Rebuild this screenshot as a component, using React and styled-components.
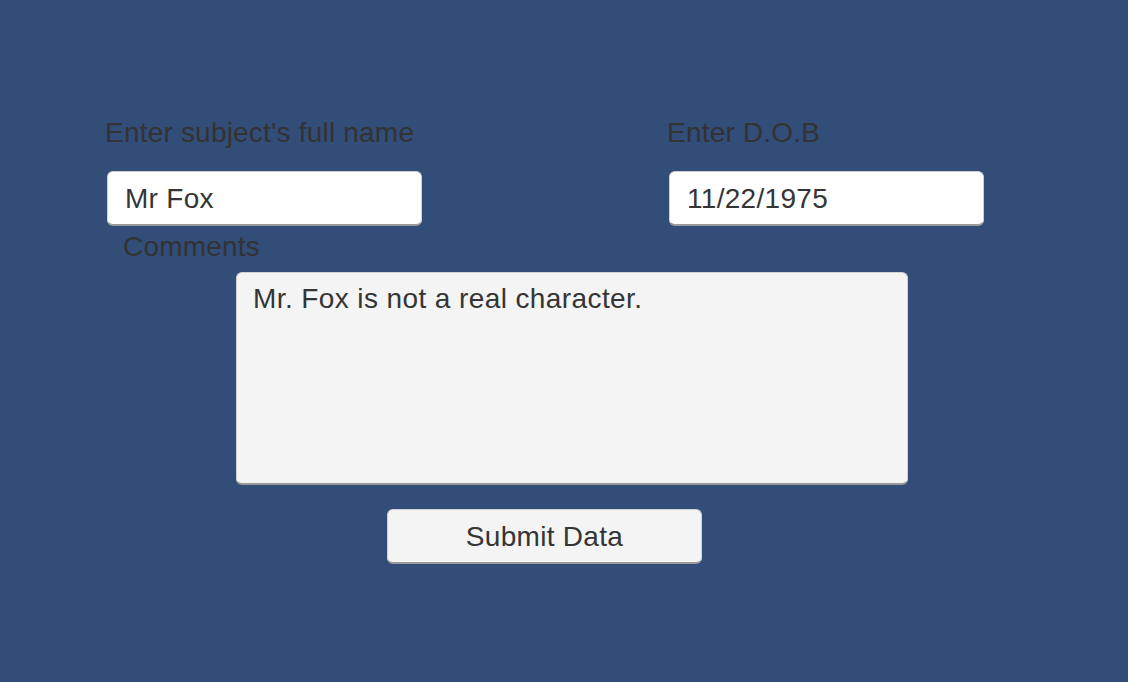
import React from "react";
import styled, { createGlobalStyle } from "styled-components";

const Global = createGlobalStyle`
  html, body { margin: 0; padding: 0; background: #314d78; }
  body { font-family: "Liberation Sans", Arial, sans-serif; }
`;

const Page = styled.div`
  width: 1128px;
  height: 682px;
  background: #314d78;
  box-sizing: border-box;
  padding-top: 117px;
  display: flex;
  flex-direction: column;
`;

const TopRow = styled.div`
  display: flex;
  padding-left: 105px;
  gap: 246px;
`;

const Field = styled.div`
  display: flex;
  flex-direction: column;
  width: 316px;
`;

const Label = styled.div`
  font-size: 28px;
  line-height: 32px;
  letter-spacing: 0.2px;
  color: #333333;
  white-space: nowrap;
`;

const Input = styled.div`
  box-sizing: border-box;
  width: 315px;
  height: 55px;
  margin-top: 22px;
  margin-left: 2px;
  background: #ffffff;
  border: 1px solid #d0d0d0;
  border-bottom: 2px solid #9a9a9a;
  border-radius: 6px;
  padding: 2px 0 0 17px;
  display: flex;
  align-items: center;
  font-size: 28px;
  letter-spacing: 0.3px;
  color: #353535;
`;

const CommentsLabel = styled(Label)`
  margin-left: 123px;
  margin-top: 5px;
`;

const TextArea = styled.div`
  box-sizing: border-box;
  width: 672px;
  height: 213px;
  margin-left: 236px;
  margin-top: 9px;
  background: #f4f4f4;
  border: 1px solid #d0d0d0;
  border-bottom: 2px solid #9a9a9a;
  border-radius: 6px;
  padding: 10px 16px;
  font-size: 28px;
  line-height: 32px;
  letter-spacing: 0.4px;
  color: #353535;
`;

const Button = styled.div`
  box-sizing: border-box;
  width: 315px;
  height: 55px;
  margin-left: 387px;
  margin-top: 24px;
  padding-top: 2px;
  background: #f4f4f4;
  border: 1px solid #d0d0d0;
  border-bottom: 2px solid #9a9a9a;
  border-radius: 6px;
  display: flex;
  align-items: center;
  justify-content: center;
  font-size: 28px;
  letter-spacing: 0.3px;
  color: #353535;
`;

export default function App() {
  return (
    <>
      <Global />
      <Page>
        <TopRow>
          <Field>
            <Label>Enter subject's full name</Label>
            <Input>Mr Fox</Input>
          </Field>
          <Field>
            <Label>Enter D.O.B</Label>
            <Input>11/22/1975</Input>
          </Field>
        </TopRow>
        <CommentsLabel>Comments</CommentsLabel>
        <TextArea>Mr. Fox is not a real character.</TextArea>
        <Button>Submit Data</Button>
      </Page>
    </>
  );
}
